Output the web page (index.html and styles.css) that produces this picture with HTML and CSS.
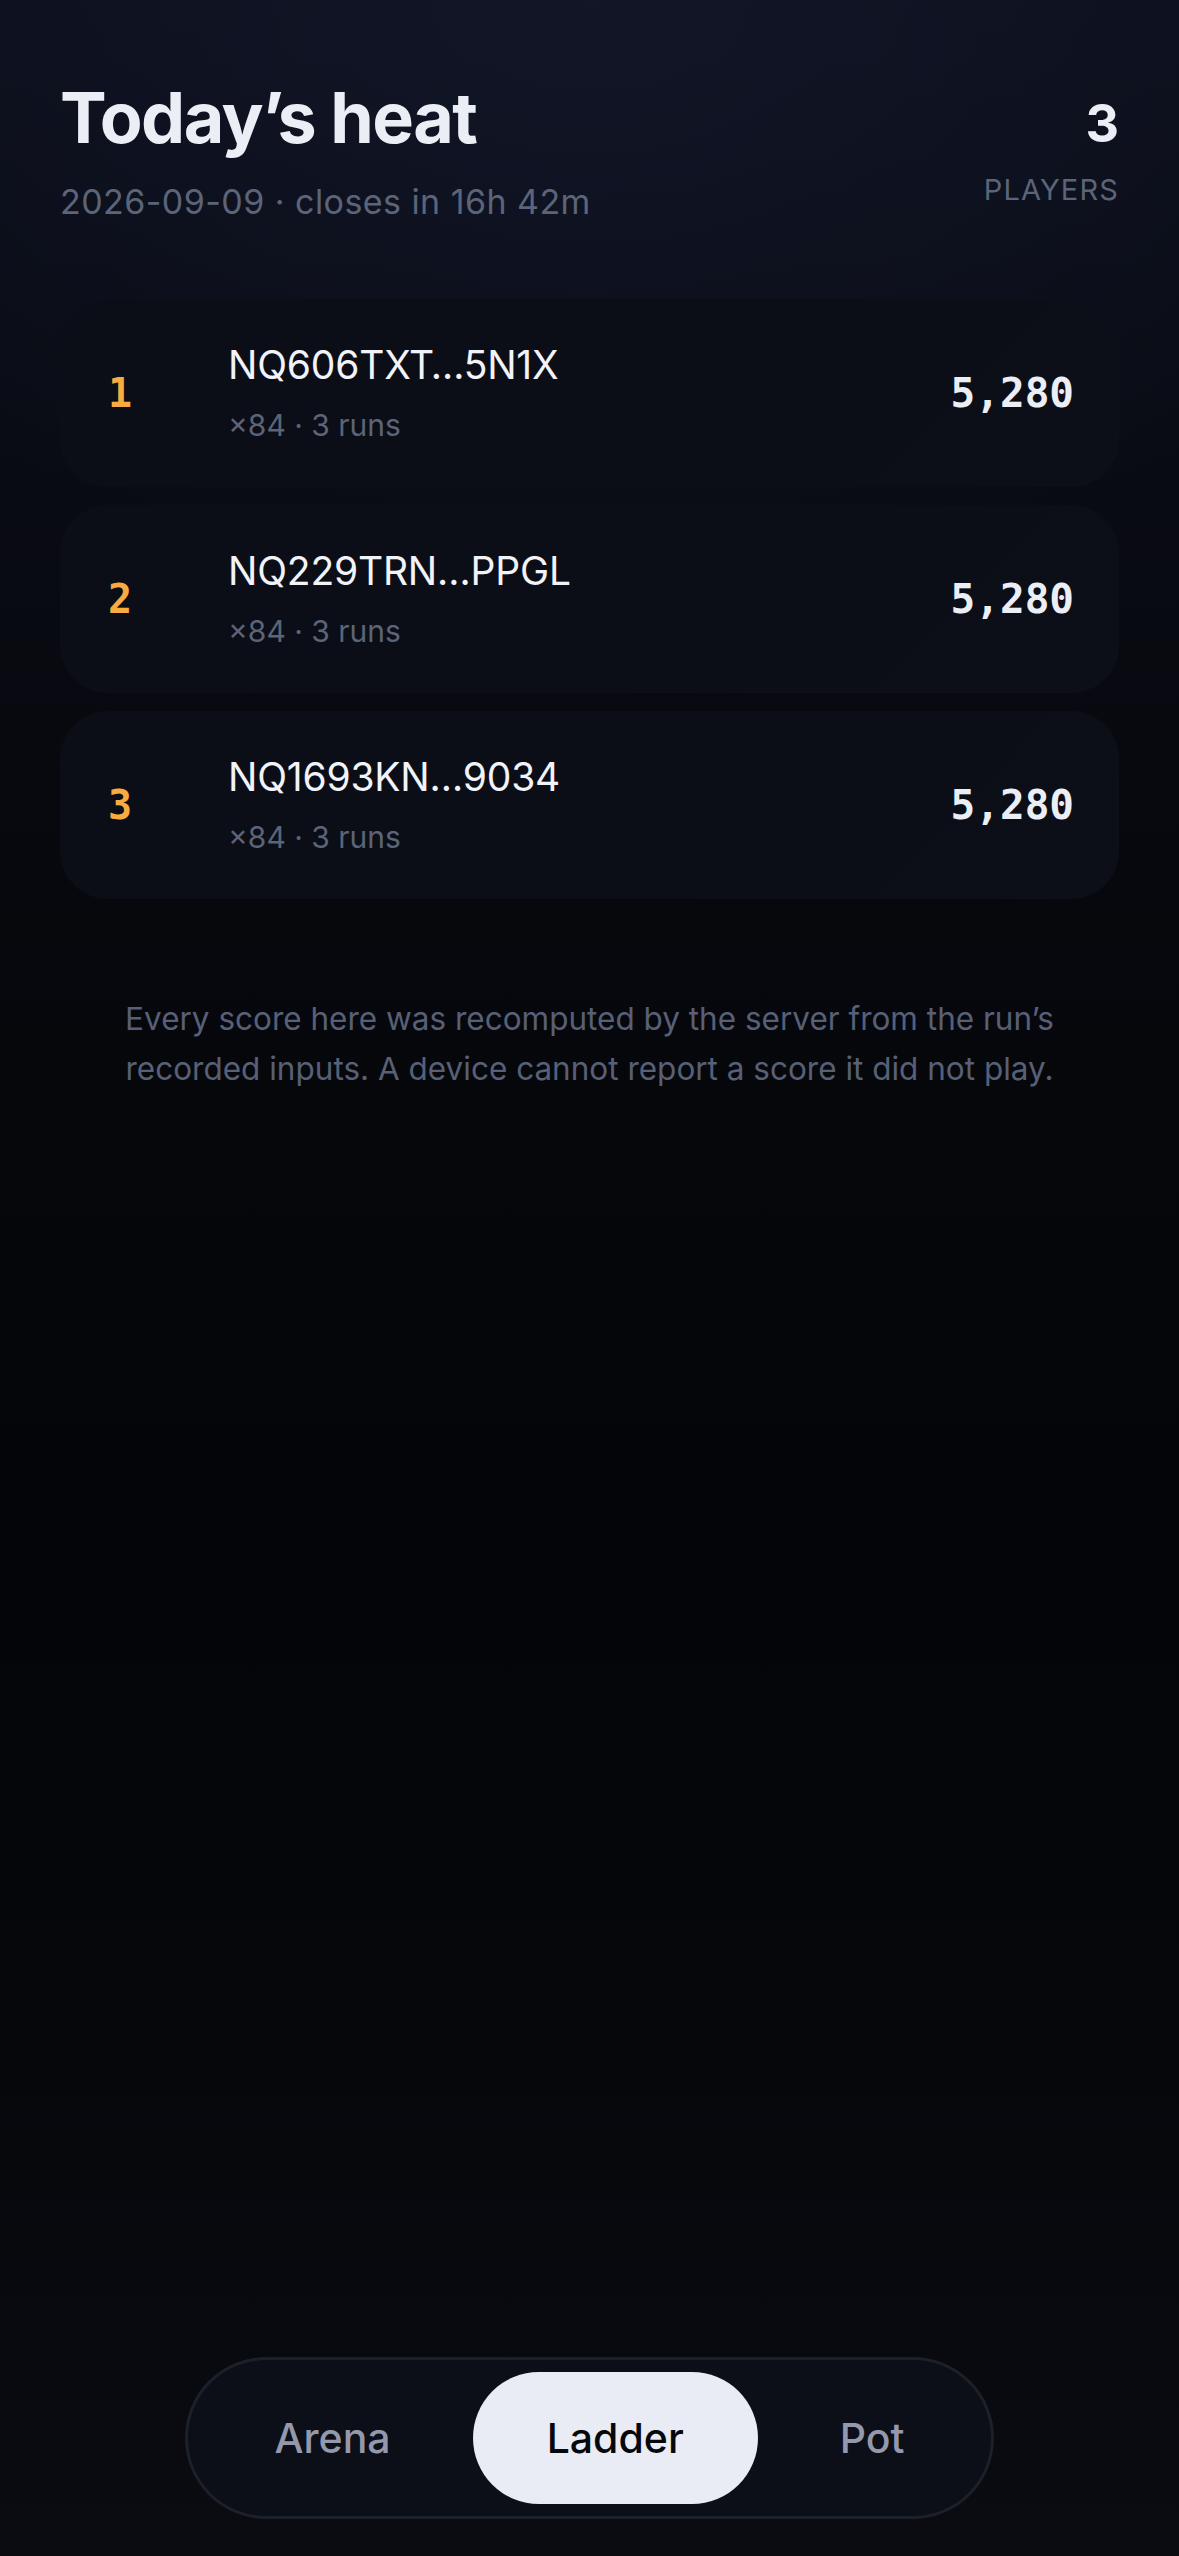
FILE: index.html
```html
<!DOCTYPE html>
<html lang="en">
<head>
<meta charset="utf-8">
<meta name="viewport" content="width=1179">
<title>Today’s heat</title>
<link rel="stylesheet" href="styles.css">
</head>
<body>
<div class="screen">
  <header class="header">
    <div class="header-main">
      <h1 class="title">Today’s heat</h1>
      <p class="subtitle">2026-09-09 · closes in 16h 42m</p>
    </div>
    <div class="header-stat">
      <div class="stat-value">3</div>
      <div class="stat-label">PLAYERS</div>
    </div>
  </header>

  <ol class="ladder">
    <li class="entry">
      <span class="rank">1</span>
      <div class="who">
        <span class="name">NQ606TXT…5N1X</span>
        <span class="meta">×84 · 3 runs</span>
      </div>
      <span class="score">5,280</span>
    </li>
    <li class="entry">
      <span class="rank">2</span>
      <div class="who">
        <span class="name">NQ229TRN…PPGL</span>
        <span class="meta">×84 · 3 runs</span>
      </div>
      <span class="score">5,280</span>
    </li>
    <li class="entry">
      <span class="rank">3</span>
      <div class="who">
        <span class="name">NQ1693KN…9034</span>
        <span class="meta">×84 · 3 runs</span>
      </div>
      <span class="score">5,280</span>
    </li>
  </ol>

  <p class="note">Every score here was recomputed by the server from the run’s recorded inputs. A device cannot report a score it did not play.</p>

  <nav class="tabbar">
    <div class="tabs">
      <span class="tab">Arena</span>
      <span class="tab tab-active">Ladder</span>
      <span class="tab">Pot</span>
    </div>
  </nav>
</div>
</body>
</html>
```

FILE: styles.css
```css
* { box-sizing: border-box; }

html, body {
  margin: 0;
  padding: 0;
  background: #05060a;
}

body {
  font-family: Inter, "Noto Sans", "Liberation Sans", sans-serif;
  color: #eef0f7;
}

.screen {
  min-height: 2556px;
  display: flex;
  flex-direction: column;
  padding: 78px 60px 37px;
  background:
    radial-gradient(ellipse 900px 600px at 50% 0%, rgba(22, 28, 50, 0.55) 0%, rgba(22, 28, 50, 0) 100%),
    linear-gradient(180deg, #0c0f1b 0%, #07080d 35%, #040508 60%, #06070b 80%, #0a0c12 100%);
}

.header {
  display: flex;
  justify-content: space-between;
  align-items: center;
}

.title {
  margin: 0;
  font-size: 70px;
  line-height: 80px;
  font-weight: 700;
  letter-spacing: -0.022em;
  color: #eceef6;
}

.subtitle {
  margin: 22px 0 0;
  font-size: 34px;
  line-height: 44px;
  letter-spacing: 0.013em;
  color: #5b6478;
}

.header-stat {
  display: flex;
  flex-direction: column;
  align-items: flex-end;
}

.stat-value {
  font-size: 52px;
  line-height: 60px;
  font-weight: 700;
  color: #eceef6;
}

.stat-label {
  margin-top: 18px;
  font-size: 29px;
  line-height: 36px;
  letter-spacing: 0.04em;
  color: #5b6478;
}

.ladder {
  list-style: none;
  margin: 75px 0 0;
  padding: 0;
  display: flex;
  flex-direction: column;
  gap: 18px;
}

.entry {
  display: flex;
  align-items: center;
  min-height: 188px;
  padding: 0 45px 0 48px;
  border-radius: 48px;
  background: linear-gradient(135deg, #0b0e17 0%, #0b0e16 60%, #0c0f17 100%);
}

.rank {
  width: 120px;
  flex: none;
  font-family: "DejaVu Sans Mono", "Liberation Mono", monospace;
  font-weight: 700;
  font-size: 40px;
  color: #f8ab3e;
}

.who {
  flex: 1;
  display: flex;
  flex-direction: column;
  min-width: 0;
}

.name {
  font-size: 39px;
  line-height: 48px;
  letter-spacing: -0.005em;
  color: #f1f3f9;
}

.meta {
  margin-top: 16px;
  font-size: 30px;
  line-height: 40px;
  color: #5b6478;
}

.score {
  font-family: "DejaVu Sans Mono", "Liberation Mono", monospace;
  font-weight: 700;
  font-size: 41px;
  color: #eceef6;
}

.note {
  margin: 95px 0 0;
  padding: 0 40px;
  text-align: center;
  font-size: 31.5px;
  line-height: 50px;
  color: #576076;
}

.tabbar {
  margin-top: auto;
  display: flex;
  justify-content: center;
}

.tabs {
  display: flex;
  gap: 8px;
  padding: 12px;
  border: 3px solid #1c2029;
  border-radius: 999px;
  background: #0c0f17;
}

.tab {
  height: 132px;
  display: flex;
  align-items: center;
  padding: 0 74px;
  border-radius: 999px;
  font-size: 41px;
  font-weight: 500;
  color: #9398ac;
}

.tab-active {
  background: #e9ecf5;
  color: #07080c;
}
```
